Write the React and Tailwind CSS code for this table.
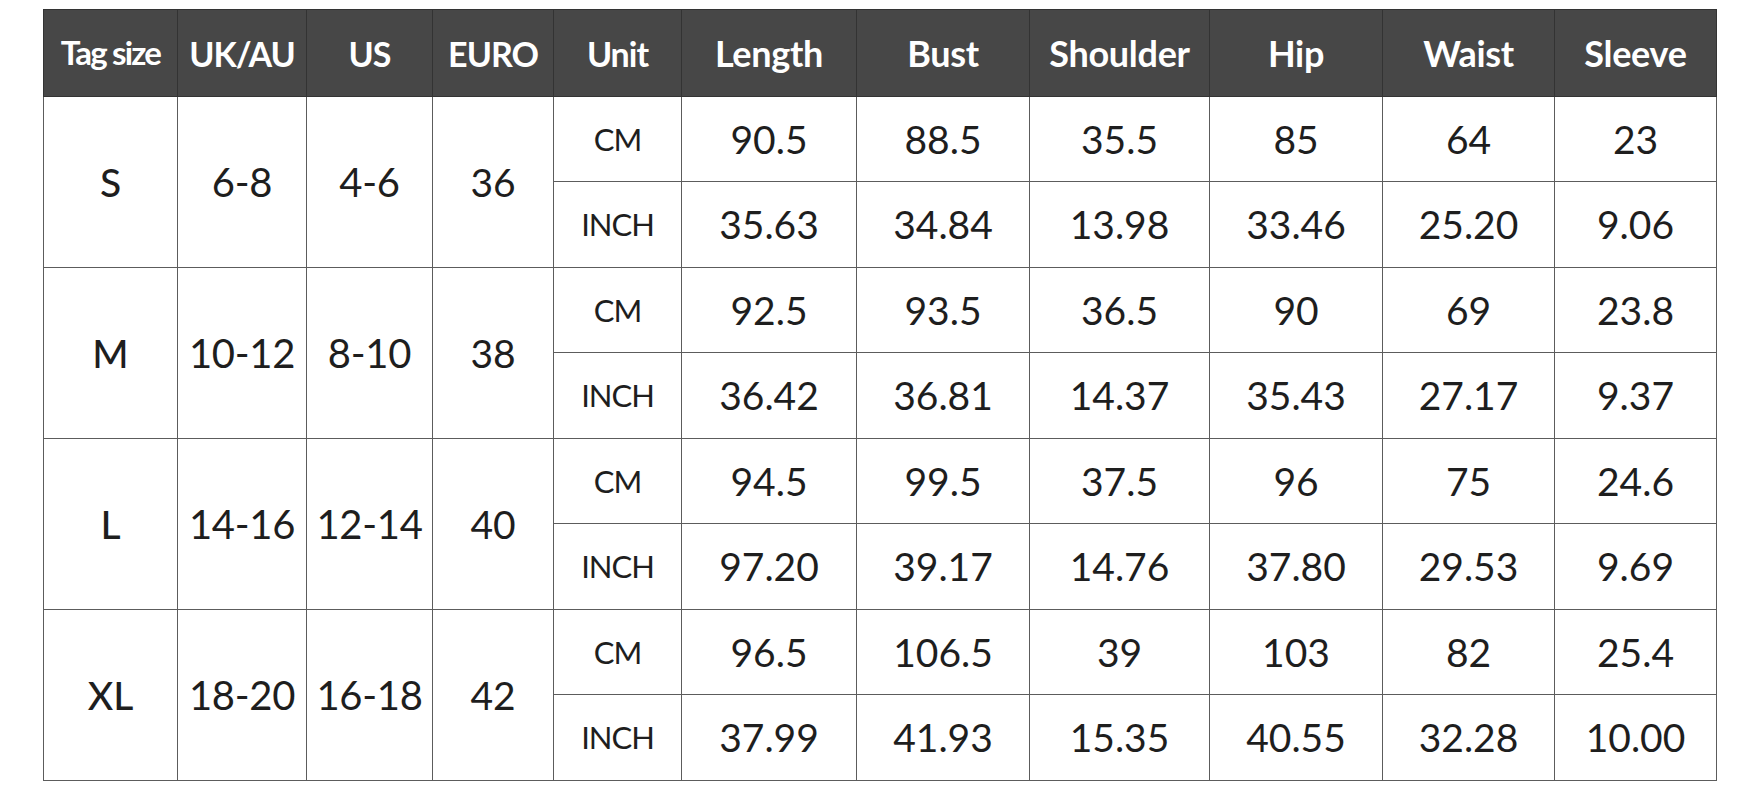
const headers = ['Tag size', 'UK/AU', 'US', 'EURO', 'Unit', 'Length', 'Bust', 'Shoulder', 'Hip', 'Waist', 'Sleeve']
const widths = [134, 129, 126, 121, 128, 175, 173, 180, 173, 172, 162]

const sizes = [
  {
    tag: 'S', uk: '6-8', us: '4-6', euro: '36',
    cm: ['90.5', '88.5', '35.5', '85', '64', '23'],
    inch: ['35.63', '34.84', '13.98', '33.46', '25.20', '9.06'],
  },
  {
    tag: 'M', uk: '10-12', us: '8-10', euro: '38',
    cm: ['92.5', '93.5', '36.5', '90', '69', '23.8'],
    inch: ['36.42', '36.81', '14.37', '35.43', '27.17', '9.37'],
  },
  {
    tag: 'L', uk: '14-16', us: '12-14', euro: '40',
    cm: ['94.5', '99.5', '37.5', '96', '75', '24.6'],
    inch: ['97.20', '39.17', '14.76', '37.80', '29.53', '9.69'],
  },
  {
    tag: 'XL', uk: '18-20', us: '16-18', euro: '42',
    cm: ['96.5', '106.5', '39', '103', '82', '25.4'],
    inch: ['37.99', '41.93', '15.35', '40.55', '32.28', '10.00'],
  },
]

const cell = 'border border-[#5c5c5c] text-center align-middle p-0'

const SizeRows = ({ size }) => {
  return (
    <>
      <tr className="h-[85px]">
        <td rowSpan={2} className={`${cell} text-[39px] font-medium`}>{size.tag}</td>
        <td rowSpan={2} className={`${cell} text-[40px] tracking-[-0.3px]`}>{size.uk}</td>
        <td rowSpan={2} className={`${cell} text-[40px] tracking-[-0.3px]`}>{size.us}</td>
        <td rowSpan={2} className={`${cell} text-[39px]`}>{size.euro}</td>
        <td className={`${cell} text-[31px] tracking-[-1px]`}>CM</td>
        {size.cm.map((v, i) => (
          <td key={i} className={`${cell} text-[39px]`}>{v}</td>
        ))}
      </tr>
      <tr className="h-[86px]">
        <td className={`${cell} text-[31px] tracking-[-1px]`}>INCH</td>
        {size.inch.map((v, i) => (
          <td key={i} className={`${cell} text-[39px]`}>{v}</td>
        ))}
      </tr>
    </>
  )
}

export default function App() {
  return (
    <div className="w-[1759px] h-[800px] bg-white pl-[43px] pt-[9px] font-['Lato','Noto_Sans',sans-serif] text-[#1e1e1e]">
      <table className="table-fixed border-collapse w-[1673px]">
        <colgroup>
          {widths.map((w, i) => (
            <col key={i} style={{ width: w }} />
          ))}
        </colgroup>
        <thead>
          <tr className="h-[87px] bg-[#474747]">
            {headers.map((h, i) => (
              <th
                key={h}
                className={`border border-[#333] text-white font-bold text-center align-middle p-0 ${i === 0 ? 'text-[33px] tracking-[-1.8px]' : i < 5 ? 'text-[34px] tracking-[-1px]' : 'text-[36px] tracking-[-0.3px]'}`}
              >
                {h}
              </th>
            ))}
          </tr>
        </thead>
        <tbody>
          {sizes.map((s) => (
            <SizeRows key={s.tag} size={s} />
          ))}
        </tbody>
      </table>
    </div>
  )
}
